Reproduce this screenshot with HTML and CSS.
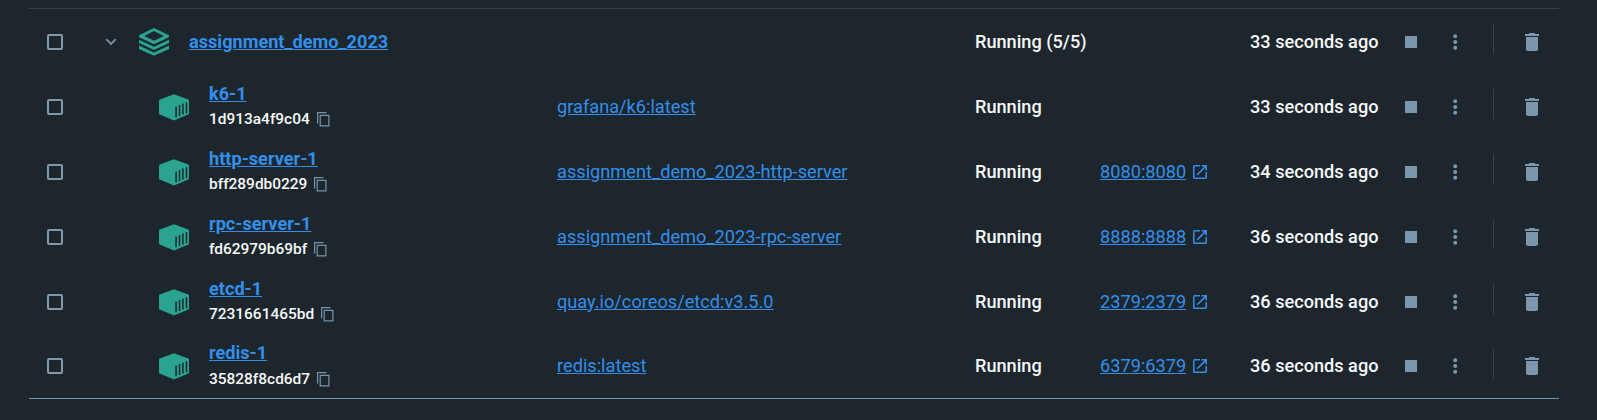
FILE: index.html
```
<!DOCTYPE html>
<html lang="en">
<head>
<meta charset="utf-8">
<title>Containers</title>
<link rel="stylesheet" href="styles.css">
</head>
<body>
<svg class="sprite" aria-hidden="true">
  <symbol id="chevron" viewBox="0 0 12 8"><path d="M1.2 1.2 6 6l4.800-4.800" fill="none" stroke="currentColor" stroke-width="1.8"/></symbol>
  <symbol id="stack" viewBox="0 0 30 28"><path fill-rule="evenodd" d="M15 0 30 7.200v2L15 16.200 0 9.200v-2ZM15 3 5.300 8 15 12.700 24.700 8Z"/><path d="M0 11.800 15 18.800 30 11.800v3.300L15 22.100 0 15.100ZM0 17.600 15 24.500 30 17.600v3.300L15 27.700 0 20.900Z"/></symbol>
  <symbol id="cube" viewBox="0 0 30 27"><path d="M15 .3 29.300 5.600Q30 5.900 30 6.600V19.400Q30 20.300 29.300 20.600L15 26.500.7 20.600Q0 20.300 0 19.400V6.600Q0 5.900.7 5.600Z"/><path class="slats" d="M17.100 12.500v10.700M20.500 11v11M23.900 9.500v11M27.500 8.300v10.900"/></symbol>
  <symbol id="copy" viewBox="0 0 13 15"><path d="M.6 11.500V.7H9.500M3.200 3.300h8.700v10.600H3.200Z" fill="none" stroke="currentColor" stroke-width="1.200"/></symbol>
  <symbol id="external" viewBox="3 3 18 18"><path d="M19 19H5V5h7V3H5a2 2 0 0 0-2 2v14a2 2 0 0 0 2 2h14c1.100 0 2-.9 2-2v-7h-2v7ZM14 3v2h3.590l-9.830 9.830 1.410 1.410L19 6.410V10h2V3h-7Z"/></symbol>
  <symbol id="dots" viewBox="0 0 4 16"><circle cx="2" cy="2.300" r="2"/><circle cx="2" cy="8" r="2"/><circle cx="2" cy="13.700" r="2"/></symbol>
  <symbol id="trash" viewBox="5 3 14 18"><path d="M6 19c0 1.100.9 2 2 2h8c1.100 0 2-.9 2-2V7H6v12ZM19 4h-3.500l-1-1h-5l-1 1H5v2h14V4Z"/></symbol>
</svg>
<main class="table">
  <div class="row">
    <span class="checkbox"></span>
    <div class="identity group"><svg class="chevron"><use href="#chevron"/></svg><svg class="stack"><use href="#stack"/></svg><a class="name">assignment_demo_2023</a></div>
    <span></span><span>Running (5/5)</span><span></span><span>33 seconds ago</span>
    <div class="actions"><i class="stop"></i><svg class="dots"><use href="#dots"/></svg><i class="divider"></i><svg class="trash"><use href="#trash"/></svg></div>
  </div>
  <div class="row">
    <span class="checkbox"></span>
    <div class="identity"><svg class="cube"><use href="#cube"/></svg><div class="labels"><a class="name">k6-1</a><div class="hash">1d913a4f9c04<svg class="copy"><use href="#copy"/></svg></div></div></div>
    <a class="link">grafana/k6:latest</a><span>Running</span><span></span><span>33 seconds ago</span>
    <div class="actions"><i class="stop"></i><svg class="dots"><use href="#dots"/></svg><i class="divider"></i><svg class="trash"><use href="#trash"/></svg></div>
  </div>
  <div class="row">
    <span class="checkbox"></span>
    <div class="identity"><svg class="cube"><use href="#cube"/></svg><div class="labels"><a class="name">http-server-1</a><div class="hash">bff289db0229<svg class="copy"><use href="#copy"/></svg></div></div></div>
    <a class="link">assignment_demo_2023-http-server</a><span>Running</span><div class="port"><a class="link">8080:8080</a><svg class="external"><use href="#external"/></svg></div><span>34 seconds ago</span>
    <div class="actions"><i class="stop"></i><svg class="dots"><use href="#dots"/></svg><i class="divider"></i><svg class="trash"><use href="#trash"/></svg></div>
  </div>
  <div class="row">
    <span class="checkbox"></span>
    <div class="identity"><svg class="cube"><use href="#cube"/></svg><div class="labels"><a class="name">rpc-server-1</a><div class="hash">fd62979b69bf<svg class="copy"><use href="#copy"/></svg></div></div></div>
    <a class="link">assignment_demo_2023-rpc-server</a><span>Running</span><div class="port"><a class="link">8888:8888</a><svg class="external"><use href="#external"/></svg></div><span>36 seconds ago</span>
    <div class="actions"><i class="stop"></i><svg class="dots"><use href="#dots"/></svg><i class="divider"></i><svg class="trash"><use href="#trash"/></svg></div>
  </div>
  <div class="row">
    <span class="checkbox"></span>
    <div class="identity"><svg class="cube"><use href="#cube"/></svg><div class="labels"><a class="name">etcd-1</a><div class="hash">7231661465bd<svg class="copy"><use href="#copy"/></svg></div></div></div>
    <a class="link">quay.io/coreos/etcd:v3.5.0</a><span>Running</span><div class="port"><a class="link">2379:2379</a><svg class="external"><use href="#external"/></svg></div><span>36 seconds ago</span>
    <div class="actions"><i class="stop"></i><svg class="dots"><use href="#dots"/></svg><i class="divider"></i><svg class="trash"><use href="#trash"/></svg></div>
  </div>
  <div class="row last">
    <span class="checkbox"></span>
    <div class="identity"><svg class="cube"><use href="#cube"/></svg><div class="labels"><a class="name">redis-1</a><div class="hash">35828f8cd6d7<svg class="copy"><use href="#copy"/></svg></div></div></div>
    <a class="link">redis:latest</a><span>Running</span><div class="port"><a class="link">6379:6379</a><svg class="external"><use href="#external"/></svg></div><span>36 seconds ago</span>
    <div class="actions"><i class="stop"></i><svg class="dots"><use href="#dots"/></svg><i class="divider"></i><svg class="trash"><use href="#trash"/></svg></div>
  </div>
</main>
</body>
</html>
```
FILE: styles.css
```
* { box-sizing: border-box; }
body {
  margin: 0;
  height: 420px;
  padding: 8px 38px 0 29px;
  overflow: hidden;
  background: #1c262c;
  color: #f7f8f9;
  font: 500 18.15px/24px Roboto, sans-serif;
}
svg { display: block; flex: none; fill: currentColor; }
.sprite { position: absolute; width: 0; height: 0; }
.table {
  border-top: 1px solid #37434a;
  border-bottom: 1px solid #7794ab;
}
.row {
  display: grid;
  grid-template-columns: 76px 452px 418px 125px 150px 154.5px 1fr;
  align-items: center;
  height: 65px;
  white-space: nowrap;
}
.last { height: 64px; }
.checkbox {
  width: 16px;
  height: 16px;
  margin-left: 18px;
  border: 2px solid #8298aa;
  border-radius: 2px;
}
.identity { display: flex; align-items: center; padding-left: 54px; }
.group { padding-left: 0; }
.chevron { width: 12px; height: 8px; color: #7794ab; margin: 0 22.5px 0 -.5px; }
.stack { width: 30px; height: 28px; color: #2aa391; margin-right: 20px; }
.cube { width: 30px; height: 27px; color: #2aa391; margin: 1px 20px 0 0; }
.slats { fill: none; stroke: #1c262c; stroke-width: 1.5; }
.name { color: #338feb; font-weight: 700; text-decoration: underline; }
.labels { display: flex; flex-direction: column; gap: 1px; padding-bottom: 1px; }
.last .labels { gap: 2px; padding-bottom: 0; }
.last .cube { margin-top: 0; }
.hash { display: flex; align-items: center; gap: 7px; font-size: 15.45px; }
.copy { width: 13px; height: 15px; margin-top: 1px; color: #7794ab; }
.last .copy { margin-top: 0; }
.link { color: #338feb; font-size: 18.2px; font-weight: 400; text-decoration: underline; }
.port { display: flex; align-items: center; gap: 6.5px; color: #338feb; }
.external { width: 14px; height: 14px; }
.actions { display: flex; align-items: center; color: #7b96ad; }
.stop { width: 12px; height: 12px; background: currentColor; }
.dots { width: 4.500px; height: 16px; margin-left: 36.5px; }
.divider { width: 1px; height: 30px; margin: 0 30.5px 5px 35.500px; background: #37434a; }
.trash { width: 14px; height: 18px; }
```
